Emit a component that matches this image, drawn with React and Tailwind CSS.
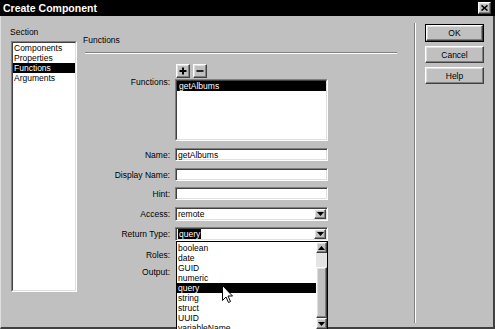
import React from "react";

const SUNKEN =
  "border border-t-[#808080] border-l-[#808080] border-b-white border-r-white shadow-[inset_1px_1px_0_#404040,inset_-1px_-1px_0_#dfdfdf] bg-white";
const RAISED =
  "border border-t-white border-l-white border-b-[#404040] border-r-[#404040] shadow-[inset_-1px_-1px_0_#808080,inset_1px_1px_0_#dfdfdf] bg-[#c0c0c0]";

function Tri({ up }) {
  return (
    <svg width="7" height="4" viewBox="0 0 7 4">
      {up ? <polygon points="0,4 7,4 3.5,0" fill="#000" /> : <polygon points="0,0 7,0 3.5,4" fill="#000" />}
    </svg>
  );
}

function Row({ label, children, className, labelClass }) {
  return (
    <div className={"flex items-center " + (className || "")}>
      <div className={"w-[87px] text-right leading-[10px] " + (labelClass || "")}>{label}</div>
      <div className="ml-[5px]">{children}</div>
    </div>
  );
}

function Input({ value, h }) {
  return (
    <div className={SUNKEN + " w-[153px] flex items-center pl-[2px] " + h}>
      <span className="leading-[10px]">{value}</span>
    </div>
  );
}

function Select({ children }) {
  return (
    <div className={SUNKEN + " w-[153px] h-[14px] flex items-center justify-between pl-[1px] pr-[1px]"}>
      <div className="leading-[10px] flex items-center">{children}</div>
      <div className={RAISED + " w-[12px] h-[10px] flex items-center justify-center"}>
        <Tri />
      </div>
    </div>
  );
}

export default function App() {
  const popupItems = ["boolean", "date", "GUID", "numeric", "query", "string", "struct", "UUID", "variableName"];
  return (
    <div className="w-[495px] h-[329px] bg-[#c0c0c0] relative overflow-hidden text-[8.5px] text-black font-['Liberation_Sans',Arial,sans-serif]">
      {/* title bar */}
      <div className="h-[16px] bg-black flex items-center justify-between pl-[3px] pr-[4px]">
        <span className="text-white font-bold text-[10.5px] leading-[13px]">Create Component</span>
        <div className={RAISED + " w-[13px] h-[12px] flex items-center justify-center"}>
          <svg width="7" height="6" viewBox="0 0 7 6">
            <path d="M0.5 0.5 L6.5 5.5 M6.5 0.5 L0.5 5.5" stroke="#000" strokeWidth="1.6" />
          </svg>
        </div>
      </div>

      {/* body */}
      <div className="h-[313px] flex border-l border-l-[#dfdfdf] border-r-2 border-r-[#404040] border-b-2 border-b-[#404040]">
        {/* section column */}
        <div className="w-[82px] pl-[9px] pt-[11px] flex flex-col">
          <div className="leading-[10px] h-[10px]">Section</div>
          <div className="mt-[4px] ml-[1px] w-[66px] h-[251px] border border-t-[#808080] border-l-[#808080] border-b-white border-r-white">
            <div className="w-full h-full bg-white border border-t-[#404040] border-l-[#404040] border-b-[#dfdfdf] border-r-[#dfdfdf]">
              {["Components", "Properties", "Functions", "Arguments"].map((t) => (
                <div
                  key={t}
                  className={
                    t === "Functions"
                      ? "h-[10px] leading-[10px] px-[1px] bg-black text-white"
                      : "h-[10px] leading-[10px] px-[1px]"
                  }
                >
                  {t}
                </div>
              ))}
            </div>
          </div>
        </div>

        {/* main panel */}
        <div className="w-[331px] pt-[19px] flex flex-col">
          <div className="leading-[10px] h-[10px]">Functions</div>
          <div className="mt-[7px] ml-[2px] w-[312px] h-[2px] border-t border-t-[#808080] border-b border-b-white" />

          {/* +/- buttons */}
          <div className="mt-[10px] ml-[93px] flex gap-[3px]">
            <div className={RAISED + " w-[14px] h-[14px] flex items-center justify-center"}>
              <svg width="8" height="8" viewBox="0 0 8 8">
                <path d="M4 0.5 V7.5 M0.5 4 H7.5" stroke="#000" strokeWidth="2" />
              </svg>
            </div>
            <div className={RAISED + " w-[14px] h-[14px] flex items-center justify-center"}>
              <svg width="8" height="8" viewBox="0 0 8 8">
                <path d="M0.5 4 H7.5" stroke="#000" strokeWidth="1.6" />
              </svg>
            </div>
          </div>

          {/* functions list */}
          <div className="mt-[1px] flex items-start">
            <div className="w-[87px] text-right leading-[10px] mt-[-2px]">Functions:</div>
            <div className="ml-[5px] w-[153px] h-[62px] border border-t-[#808080] border-l-[#808080] border-b-white border-r-white">
              <div className="w-full h-full bg-white border border-t-[#404040] border-l-[#404040] border-b-[#dfdfdf] border-r-[#dfdfdf]">
                <div className="h-[10px] leading-[10px] bg-black text-white pl-[2px]">getAlbums</div>
              </div>
            </div>
          </div>

          <Row label="Name:" className="mt-[7px]">
            <Input value="getAlbums" h="h-[13px]" />
          </Row>
          <Row label="Display Name:" className="mt-[7px]">
            <Input value="" h="h-[13px]" />
          </Row>
          <Row label="Hint:" className="mt-[6px]">
            <Input value="" h="h-[13px]" />
          </Row>
          <Row label="Access:" className="mt-[7px]">
            <Select>
              <span className="pl-[1px]">remote</span>
            </Select>
          </Row>
          <Row label="Return Type:" className="mt-[6px]">
            <Select>
              <span className="ml-[1px] px-[1px] bg-black text-white">query</span>
            </Select>
          </Row>
          <Row label="Roles:" className="mt-[9px]">
            <div className="h-[10px]" />
          </Row>
          <Row label="Output:" className="mt-[7px]">
            <div className="h-[10px]" />
          </Row>
        </div>

        {/* vertical separator */}
        <div className="pt-[7px] pb-[4px] flex">
          <div className="w-[2px] h-full border-l border-l-[#808080] border-r border-r-white" />
        </div>

        {/* buttons column */}
        <div className="pl-[9px] pt-[8px] flex flex-col gap-[4px]">
          <div className="w-[59px] h-[18px] border border-black">
            <div className={RAISED + " w-full h-full flex items-center justify-center leading-[10px]"}>OK</div>
          </div>
          <div className={RAISED + " w-[59px] h-[17px] flex items-center justify-center leading-[10px]"}>Cancel</div>
          <div className={RAISED + " w-[59px] h-[17px] flex items-center justify-center leading-[10px]"}>Help</div>
        </div>
      </div>

      {/* dropdown popup */}
      <div className="absolute left-[176px] top-[241px] w-[152px] h-[94px] bg-white border border-black flex">
        <div className="flex-1 pt-[1px]">
          {popupItems.map((t) => (
            <div
              key={t}
              className={
                t === "query"
                  ? "h-[10px] leading-[10px] pl-[1px] bg-black text-white"
                  : "h-[10px] leading-[10px] pl-[1px]"
              }
            >
              {t}
            </div>
          ))}
        </div>
        <div className="w-[11px] flex flex-col bg-[#e4e4e4]">
          <div className={RAISED + " h-[11px] flex items-center justify-center"}>
            <Tri up />
          </div>
          <div className="h-[14px]" />
          <div className={RAISED + " h-[51px]"} />
          <div className={RAISED + " h-[11px] flex items-center justify-center"}>
            <Tri />
          </div>
        </div>
      </div>

      {/* mouse cursor */}
      <svg className="absolute left-[222px] top-[285px]" width="12" height="19" viewBox="0 0 12 19">
        <path d="M0.5 0.5 L0.5 15.5 L4 12 L6.5 17.5 L8.5 16.5 L6 11 L10.5 11 Z" fill="#fff" stroke="#000" strokeWidth="1" />
      </svg>
    </div>
  );
}
